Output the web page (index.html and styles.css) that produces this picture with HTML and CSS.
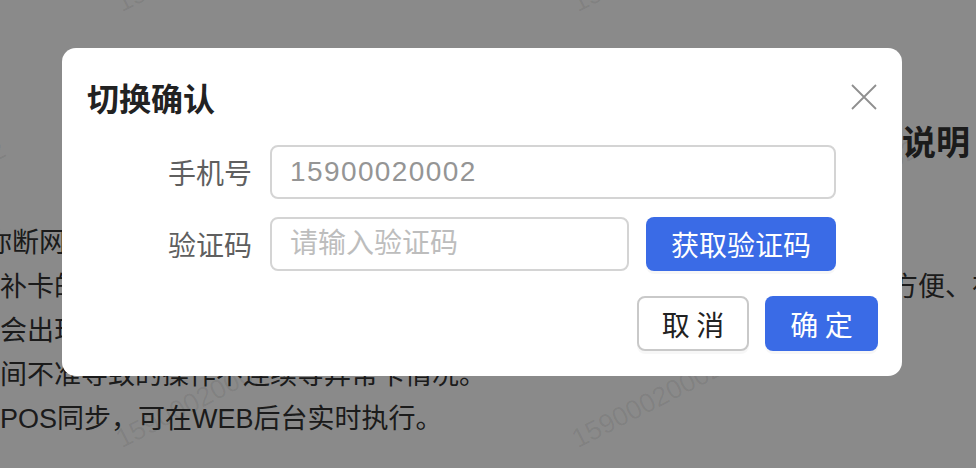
FILE: index.html
```html
<!DOCTYPE html>
<html>
<head>
	<meta charset="utf-8" />
	<title>切换确认</title>
	<link rel="stylesheet" href="styles.css">
</head>
<body>
	<div class="doc">
		<h2 class="doc-title">补卡说明</h2>
		<p class="doc-line first">你断网的情况下也可以正常打卡。</p>
		<p class="doc-line">补卡的操作，为管理者和广大员工提供了灵活的考勤管理方式，使用都非常方便、在外出时也可补卡。</p>
		<p class="doc-line">会出现打卡时间与实际时间不一致，</p>
		<p class="doc-line">间不准导致的操作不连续等异常卡情况。</p>
		<p class="doc-line">POS同步，可在WEB后台实时执行。</p>

		<span class="mark m1">15900020002</span>
		<span class="mark m2">15900020002</span>
		<span class="mark m3">15900020002</span>
		<span class="mark m4">15900020002</span>
		<span class="mark m5">15900020002</span>
		<span class="mark m6">15900020002</span>
		<span class="mark m7">15900020002</span>
	</div>

	<div class="mask">
		<div class="dialog">
			<div class="dialog-head">
				<span class="dialog-title">切换确认</span>
				<span class="close">
					<svg width="26" height="26" viewBox="0 0 26 26">
						<path d="M1 1 L25 25 M25 1 L1 25" stroke="#8f8f8f" stroke-width="1.8" fill="none" />
					</svg>
				</span>
			</div>
			<div class="form">
				<div class="row">
					<label class="label">手机号</label>
					<input class="field phone" value="15900020002" readonly>
				</div>
				<div class="row">
					<label class="label">验证码</label>
					<input class="field" placeholder="请输入验证码">
					<button class="btn primary code">获取验证码</button>
				</div>
			</div>
			<div class="foot">
				<button class="btn plain">取 消</button>
				<button class="btn primary">确 定</button>
			</div>
		</div>
	</div>
</body>
</html>
```

FILE: styles.css
```css
*{
	padding: 0;
	margin: 0;
	box-sizing: border-box;
}
body{
	width: 976px;
	height: 468px;
	overflow: hidden;
	background: #fff;
	font-family: "Liberation Sans", "Noto Sans CJK SC", sans-serif;
	color: #333;
}
.doc{
	position: relative;
	height: 468px;
	padding-top: 121px;
	white-space: nowrap;
}
.doc-title{
	padding-left: 834px;
	font-size: 34px;
	line-height: 44px;
	font-weight: bold;
	margin-bottom: 56px;
}
.doc-line{
	font-size: 27px;
	line-height: 44px;
}
.doc-line.first{
	text-indent: -15px;
}
.mark{
	position: absolute;
	font-size: 27px;
	line-height: 27px;
	color: rgba(0,0,0,0.07);
	transform: rotate(-27deg);
	transform-origin: 0 100%;
}
.m1{ left: 124px; top: -10px; }
.m2{ left: 580px; top: -10px; }
.m3{ left: -137px; top: 208px; }
.m4{ left: 319px; top: 208px; }
.m5{ left: 775px; top: 208px; }
.m6{ left: 124px; top: 426px; }
.m7{ left: 580px; top: 426px; }

.mask{
	position: fixed;
	top: 0;
	left: 0;
	right: 0;
	bottom: 0;
	background: rgba(0,0,0,0.46);
}
.dialog{
	width: 840px;
	margin: 48px 0 0 62px;
	background: #fff;
	border-radius: 14px;
	padding: 29px 24px 25px 25px;
}
.dialog-head{
	display: flex;
	justify-content: space-between;
	align-items: center;
	height: 40px;
}
.dialog-title{
	font-family: "Noto Sans CJK SC", sans-serif;
	font-size: 32px;
	font-weight: bold;
	color: #222;
}
.close{
	display: flex;
	width: 26px;
	height: 26px;
	margin-right: 1px;
}
.form{
	margin: 28px 42px 0 0;
	display: flex;
	flex-direction: column;
	gap: 18px;
}
.row{
	display: flex;
	align-items: center;
	gap: 17px;
}
.label{
	width: 166px;
	padding-right: 1px;
	text-align: right;
	font-family: "Noto Sans CJK SC", sans-serif;
	font-size: 28px;
	color: #5f5f5f;
}
.field{
	flex: 1;
	min-width: 0;
	height: 54px;
	border: 2px solid #d4d4d4;
	border-radius: 8px;
	padding: 0 18px;
	font-family: "Liberation Sans", "Noto Sans CJK SC", sans-serif;
	font-size: 28px;
	color: #959595;
	outline: none;
	background: #fff;
}
.field::placeholder{
	color: #bdbdbd;
}
.phone{
	letter-spacing: 1.4px;
}
.btn{
	height: 55px;
	border-radius: 8px;
	font-family: "Noto Sans CJK SC", sans-serif;
	font-size: 28px;
	cursor: pointer;
	box-shadow: 0 3px 0 rgba(0,0,0,0.03);
}
.primary{
	border: none;
	background: #3a6be6;
	color: #fff;
}
.code{
	width: 190px;
	height: 54px;
}
.plain{
	background: #fff;
	border: 2px solid #c9c9c9;
	color: #222;
}
.foot{
	margin-top: 25px;
	display: flex;
	justify-content: flex-end;
	gap: 16px;
}
.foot .btn{
	width: 112px;
}
.foot .primary{
	width: 113px;
}
```
